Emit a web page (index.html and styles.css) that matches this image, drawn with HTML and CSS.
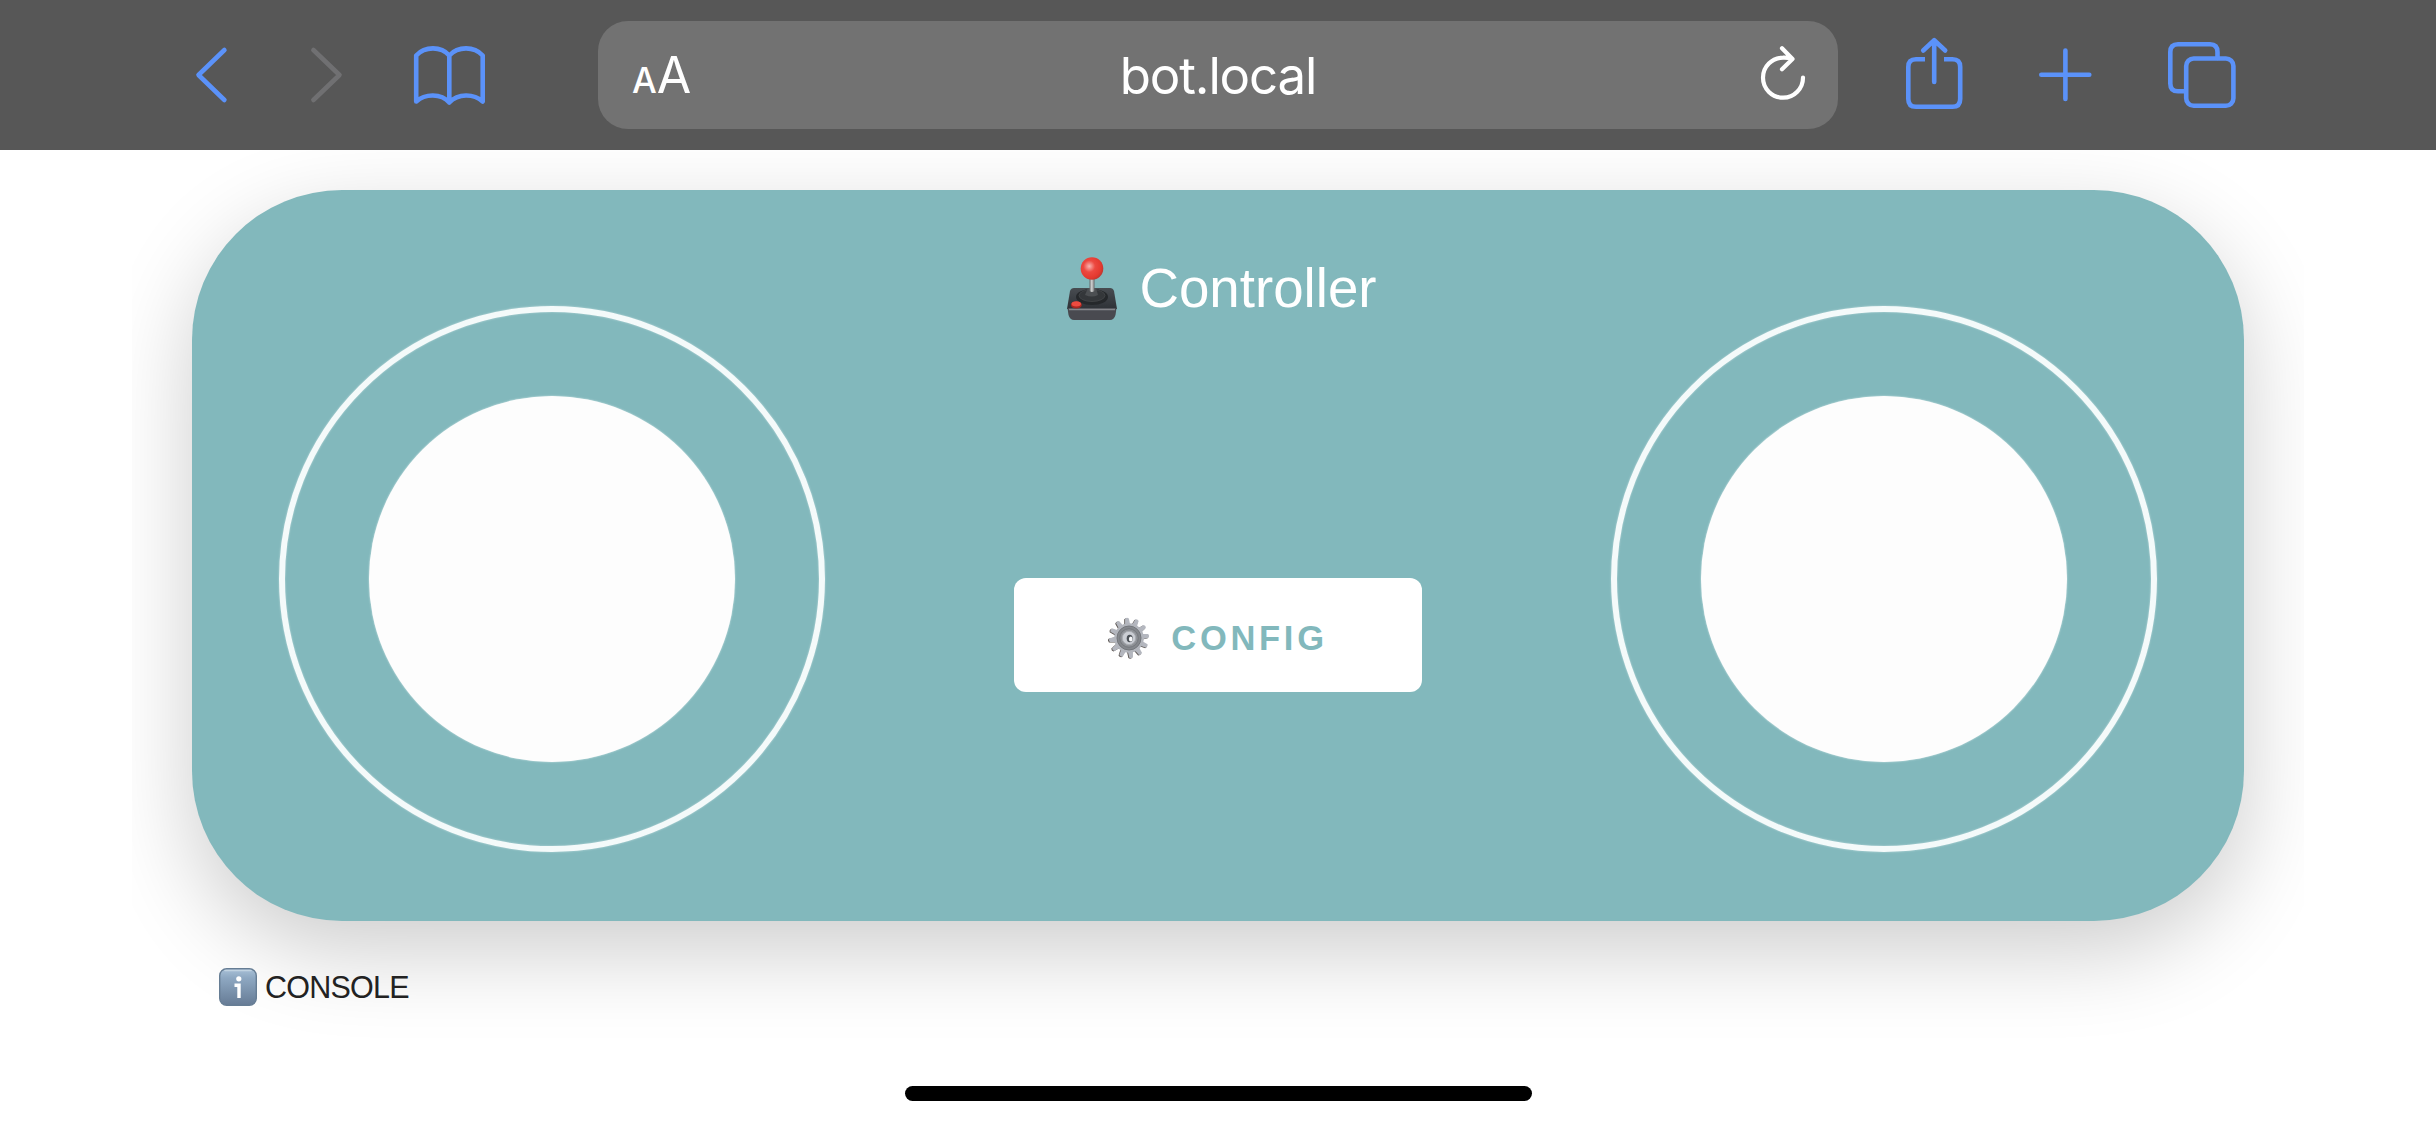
FILE: index.html
```html
<!DOCTYPE html>
<html lang="en">
<head>
<meta charset="utf-8">
<title>bot.local</title>
<link rel="stylesheet" href="styles.css">
</head>
<body>
<header class="toolbar">
  <nav class="nav-buttons">
    <svg class="icon" width="44" height="70" viewBox="190 40 44 70"><path d="M224.400 50 198.500 75l25.900 25"/></svg>
    <svg class="icon disabled" width="44" height="70" viewBox="304 40 44 70"><path d="M313.400 50 339.500 75l-26.100 25"/></svg>
    <svg class="icon book" width="84" height="70" viewBox="408 40 84 70"><path d="M449.300 55.500C441 46 425 46 416.200 55.500V101.500C425 93.500 441 93 449.300 102.500C458 93 474 93.500 482.700 101.500V55.500C474 46 458 46 449.300 55.500V102.500"/></svg>
  </nav>
  <div class="address">
    <span class="text-size"><span class="small-a">A</span><span class="big-a">A</span></span>
    <span class="host">bot.local</span>
    <svg class="icon reload" width="60" height="70" viewBox="1753 40 60 70"><path d="M1803 77.500A20 20 0 1 1 1783 57.700Q1788 57.500 1792.500 59M1782 48.200 1792.500 59 1782 69.300"/></svg>
  </div>
  <nav class="page-buttons">
    <svg class="icon" width="70" height="80" viewBox="1900 35 70 80"><path class="butt" d="M1925 59.300H1916Q1908.300 59.300 1908.300 67V99Q1908.300 106.800 1916 106.800H1952.500Q1960.200 106.800 1960.200 99V67Q1960.200 59.300 1952.500 59.300H1944"/><path d="M1934.200 82V40.200M1923.200 50.500 1934.200 40.200 1945.200 50.500"/></svg>
    <svg class="icon" width="70" height="80" viewBox="2030 35 70 80"><path d="M2041.300 74.700H2089.300M2065.400 50.500V99"/></svg>
    <svg class="icon" width="80" height="80" viewBox="2160 35 80 80"><path d="M2184 91.300H2178Q2170.300 91.300 2170.300 83.500V52Q2170.300 44.200 2178 44.200H2210Q2217.500 44.200 2217.500 52V58"/><rect x="2186.200" y="58.500" width="47.200" height="47.200" rx="7.500"/></svg>
  </nav>
</header>
<main class="page">
  <section class="controller">
    <div class="joystick"><div class="knob"></div></div>
    <div class="middle">
      <h1 class="title">
        <svg width="50" height="64" viewBox="0 0 50 64">
          <defs>
            <radialGradient id="ball" cx=".38" cy=".4" r=".65"><stop offset="0" stop-color="#f9b4b1"/><stop offset=".4" stop-color="#ec4840"/><stop offset=".8" stop-color="#e4392f"/><stop offset="1" stop-color="#bd3730"/></radialGradient>
            <linearGradient id="stick"><stop offset="0" stop-color="#686b6d"/><stop offset=".45" stop-color="#d5d6d6"/><stop offset="1" stop-color="#67696b"/></linearGradient>
            <linearGradient id="base" x2="0" y2="1"><stop offset="0" stop-color="#484c51"/><stop offset="1" stop-color="#2e3237"/></linearGradient>
          </defs>
          <path d="M3 34Q4 31 7 31H43Q46 31 47 34L50 52H0Z" fill="url(#base)"/>
          <path d="M.500 51H49.500L48.500 58Q47 63 43 63H7Q3 63 1.500 58Z" fill="#494a50"/>
          <path d="M2 52.500H48" stroke="#85868b" stroke-width="1.300"/>
          <ellipse cx="25" cy="40" rx="16" ry="8" fill="#25282b"/>
          <ellipse cx="25" cy="38.500" rx="13" ry="6" fill="#34373a" stroke="#484b4e" stroke-width=".7"/>
          <path d="M21 31H29L31 38Q25 41 18 38Z" fill="#4c4f52"/>
          <path d="M22.500 20H27.500V34Q25 36 22.500 34Z" fill="url(#stick)"/>
          <ellipse cx="9.300" cy="48" rx="5.500" ry="3.400" fill="#a92720"/><ellipse cx="9.300" cy="46.800" rx="4.700" ry="2.600" fill="#ed4b40"/>
          <circle cx="25" cy="11.500" r="11.300" fill="url(#ball)"/>
        </svg>
        <span>Controller</span>
      </h1>
      <button class="config">
        <svg width="42" height="42" viewBox="-21 -21 42 42">
          <defs>
            <path id="tooth" d="M-2.700-12-1.900-19.500Q0-21 1.900-19.500L2.700-12Z"/>
            <g id="teeth"><use href="#tooth" transform="rotate(-6)"/><use href="#tooth" transform="rotate(24)"/><use href="#tooth" transform="rotate(54)"/><use href="#tooth" transform="rotate(84)"/><use href="#tooth" transform="rotate(114)"/><use href="#tooth" transform="rotate(144)"/><use href="#tooth" transform="rotate(174)"/><use href="#tooth" transform="rotate(204)"/><use href="#tooth" transform="rotate(234)"/><use href="#tooth" transform="rotate(264)"/><use href="#tooth" transform="rotate(294)"/><use href="#tooth" transform="rotate(324)"/></g>
          </defs>
          <use href="#teeth" x="-.8" y=".5" fill="#5b5551"/>
          <use href="#teeth" fill="#b4b7bf"/>
          <circle r="14.800" fill="#b2b5bc"/>
          <circle r="12" fill="#85888d" stroke="#74777c"/>
          <circle r="9.300" fill="#8f9297" stroke="#75787d"/>
          <circle r="6.700" fill="#cbced4" stroke="#a9acb2"/>
          <ellipse cx=".7" cy=".5" rx="3" ry="3.700" fill="#4c5157"/><ellipse cx="1.700" cy="1" rx="1.800" ry="2.500" fill="#f7f8fa"/>
        </svg>
        <span>CONFIG</span>
      </button>
    </div>
    <div class="joystick"><div class="knob"></div></div>
  </section>
  <div class="console">
    <svg width="38" height="38" viewBox="0 0 38 38">
      <defs><linearGradient id="info" x2="0" y2="1"><stop offset="0" stop-color="#a9c1d7"/><stop offset=".25" stop-color="#8ea8c2"/><stop offset="1" stop-color="#667b95"/></linearGradient></defs>
      <rect x=".7" y=".7" width="36.600" height="36.600" rx="7" fill="url(#info)" stroke="#667d94" stroke-width="1.400"/>
      <path d="M6 2.500H32" stroke="#c1d3e1" stroke-width="1.500" stroke-linecap="round"/>
      <circle cx="19.800" cy="10.800" r="2.600" fill="#fff"/><path d="M15.500 17.300H20V30" fill="none" stroke="#fff" stroke-width="3.400"/>
    </svg>
    <span>CONSOLE</span>
  </div>
  <div class="home-indicator"></div>
</main>
</body>
</html>
```
FILE: styles.css
```css
* { box-sizing: border-box; }

body {
  margin: 0;
  height: 1125px;
  display: flex;
  flex-direction: column;
  overflow: hidden;
  background: #fff;
  font-family: "Liberation Sans", Arial, sans-serif;
}

svg { display: block; flex: none; }

.toolbar {
  display: flex;
  align-items: center;
  flex: none;
  height: 150px;
  padding: 0 196px 0 190px;
  background: #575757;
}

.icon {
  fill: none;
  stroke: #5b92f9;
  stroke-width: 4.600px;
  stroke-linecap: round;
  stroke-linejoin: round;
}

.icon.disabled { stroke: #707072; }
.butt { stroke-linecap: butt; }

.nav-buttons {
  display: flex;
  gap: 70px;
  width: 408px;
}

.nav-buttons .book { margin-left: -10px; }

.address {
  display: grid;
  grid-template-columns: 150px 1fr 150px;
  align-items: center;
  width: 1240px;
  height: 108px;
  border-radius: 30px;
  background: #727272;
  color: #fff;
  font-family: Inter, sans-serif;
}

.text-size {
  display: flex;
  align-items: baseline;
  padding-left: 34px;
}

.small-a {
  font-size: 35px;
  font-weight: 500;
}

.big-a { font-size: 50px; }

.host {
  text-align: center;
  font-size: 51px;
  letter-spacing: -1.150px;
}

.reload {
  justify-self: end;
  margin-right: 25px;
  stroke: #fff;
  stroke-width: 4.200px;
}

.page-buttons {
  display: flex;
  gap: 60px;
  margin-left: 62px;
}

.page {
  display: flex;
  flex-direction: column;
  flex: 1;
  padding: 40px 192px 24px;
  clip-path: inset(0 132px);
}

.controller {
  display: flex;
  justify-content: space-between;
  height: 731px;
  padding: 116px 87px 0;
  border-radius: 150px;
  background: #82b8bc;
  box-shadow: 0 30px 90px rgba(0, 0, 0, 0.200);
}

.joystick {
  display: grid;
  place-items: center;
  width: 546px;
  height: 546px;
  border: 6px solid #f4fafa;
  border-radius: 50%;
  box-shadow: 0 0 2px #c0dcde, inset 0 0 2px #c0dcde;
}

.knob {
  width: 366px;
  height: 366px;
  border-radius: 50%;
  background: #fdfdfd;
  box-shadow: 0 0 2px #d8eaeb;
}

.middle {
  display: flex;
  flex-direction: column;
  align-items: center;
  margin-top: -50px;
}

.title {
  display: flex;
  align-items: center;
  gap: 22px;
  height: 66px;
  margin: 0 0 256px 8px;
  color: #fff;
  font-size: 54.700px;
  font-weight: 400;
}

.title span { margin-top: -2px; }

.config {
  display: flex;
  justify-content: center;
  align-items: center;
  gap: 21px;
  width: 408px;
  height: 114px;
  padding: 6px 0 0;
  border: 0;
  border-radius: 12px;
  background: #fff;
  color: #82b8bc;
  font: bold 34.500px "Liberation Sans", Arial, sans-serif;
  letter-spacing: 3.700px;
}

.console {
  display: flex;
  align-items: center;
  gap: 8px;
  margin: 47px 0 0 27px;
  color: #222;
  font-size: 30.500px;
  letter-spacing: -0.750px;
}

.home-indicator {
  align-self: center;
  width: 627px;
  height: 15px;
  margin-top: auto;
  border-radius: 8px;
  background: #000;
}
```
